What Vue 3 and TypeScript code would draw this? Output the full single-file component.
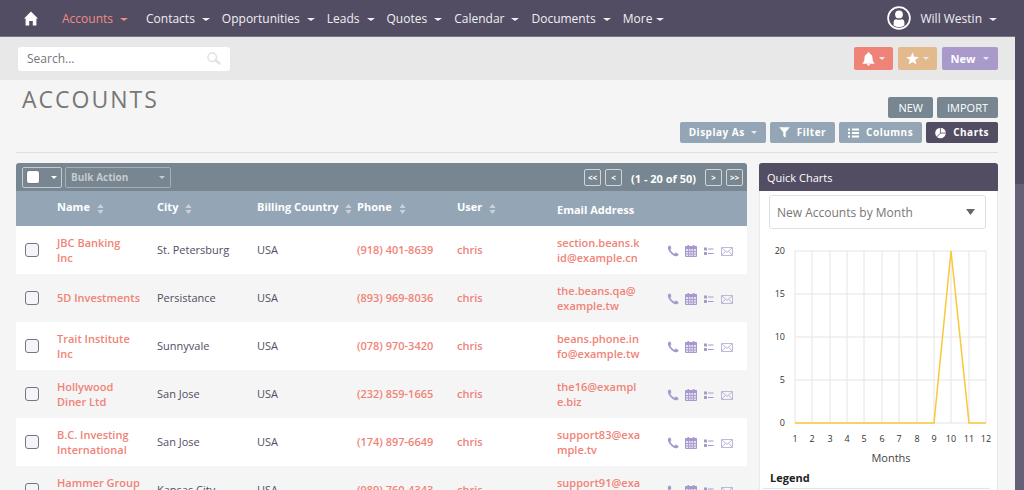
<script setup lang="ts">
import { ref } from 'vue'

interface Account {
  name: string
  city: string
  country: string
  phone: string
  user: string
  email: string
}

const modules: string[] = ['Accounts', 'Contacts', 'Opportunities', 'Leads', 'Quotes', 'Calendar', 'Documents']

const columns: string[] = ['Name', 'City', 'Billing Country', 'Phone', 'User']

const accounts: Account[] = [
  { name: 'JBC Banking Inc', city: 'St. Petersburg', country: 'USA', phone: '(918) 401-8639', user: 'chris', email: 'section.beans.kid@example.cn' },
  { name: '5D\u00a0Investments', city: 'Persistance', country: 'USA', phone: '(893) 969-8036', user: 'chris', email: 'the.beans.qa@example.tw' },
  { name: 'Trait Institute Inc', city: 'Sunnyvale', country: 'USA', phone: '(078) 970-3420', user: 'chris', email: 'beans.phone.info@example.tw' },
  { name: 'Hollywood Diner Ltd', city: 'San Jose', country: 'USA', phone: '(232) 859-1665', user: 'chris', email: 'the16@example.biz' },
  { name: 'B.C. Investing International', city: 'San Jose', country: 'USA', phone: '(174) 897-6649', user: 'chris', email: 'support83@example.tv' },
  { name: 'Hammer\u00a0Group Inc', city: 'Kansas City', country: 'USA', phone: '(989) 760-4343', user: 'chris', email: 'support91@example.com' }
]

const search = ref('')
const selected = ref<string[]>([])
const allSelected = ref(false)

const monthly: number[] = [0, 0, 0, 0, 0, 0, 0, 0, 0, 20, 0, 0]
const ticks: number[] = [20, 15, 10, 5, 0]
const plot = { left: 35, right: 226, top: 17, bottom: 189 }
const px = (month: number): number => Math.round(plot.left + ((month - 1) * (plot.right - plot.left)) / 11)
const py = (value: number): number => plot.bottom - (value * (plot.bottom - plot.top)) / 20
const line = monthly.map((v, i) => `${px(i + 1)},${py(v)}`).join(' ')
</script>

<template>
  <div class="page">
    <div class="content">
      <header class="navbar">
        <a class="home" href="#" aria-label="Home">
          <svg width="14" height="15" viewBox="0 0 14 15"><path d="M7 0.5 L14 7.6 H12.4 V14.5 H8.8 V10 H5.2 V14.5 H1.6 V7.6 H0 Z" fill="#fff" /></svg>
        </a>
        <nav class="modules">
          <a v-for="(m, i) in modules" :key="m" href="#" :class="['module', { active: i === 0 }]">{{ m }}<i class="caret"></i></a>
          <a href="#" class="module more">More<i class="caret"></i></a>
        </nav>
        <a href="#" class="user">
          <svg width="24" height="24" viewBox="0 0 24 24">
            <circle cx="12" cy="12" r="10.9" fill="none" stroke="#fff" stroke-width="1.7" />
            <circle cx="12" cy="8.4" r="3.9" fill="#fff" />
            <path d="M6.6 19.6 V16.6 Q6.6 13.2 9.4 13.2 Q12 14.2 14.6 13.2 Q17.4 13.2 17.4 16.6 V19.6 Q12 23 6.6 19.6Z" fill="#fff" />
          </svg>
          <span>Will Westin</span><i class="caret"></i>
        </a>
      </header>

      <div class="subbar">
        <form class="search" role="search" @submit.prevent>
          <input v-model="search" type="text" placeholder="Search..." aria-label="Search" />
          <button type="submit" aria-label="Run search">
            <svg width="14" height="13" viewBox="0 0 14 13" fill="none" stroke="#e2e2e2"><circle cx="5.2" cy="5.2" r="4.3" stroke-width="1.5" /><path d="M8.6 8.2 L12.4 11.4" stroke-width="2.6" stroke-linecap="round" /></svg>
          </button>
        </form>
        <div class="quick">
          <button class="btn alerts" aria-label="Alerts">
            <svg width="13" height="14" viewBox="0 0 13 14" fill="#fff"><path d="M6.5 0.3 C7.2 0.3 7.6 0.8 7.5 1.5 C9.6 2.1 10.5 3.8 10.5 6 C10.5 8.8 11.2 9.9 12.4 11 V11.8 H0.6 V11 C1.8 9.9 2.5 8.8 2.5 6 C2.5 3.8 3.4 2.1 5.5 1.5 C5.4 0.8 5.8 0.3 6.5 0.3Z" /><path d="M4.8 12 H8.2 Q7.8 13.7 6.5 13.7 Q5.2 13.7 4.8 12Z" /></svg>
            <i class="caret"></i>
          </button>
          <button class="btn favorites" aria-label="Favorites">
            <svg width="13" height="13" viewBox="0 0 13 13"><path d="M6.5 0.2 L8.2 4.8 L12.9 4.9 L9.2 7.9 L10.5 12.6 L6.5 9.9 L2.5 12.6 L3.8 7.9 L0.1 4.9 L4.8 4.8Z" fill="#fff" /></svg>
            <i class="caret"></i>
          </button>
          <button class="btn create">New<i class="caret"></i></button>
        </div>
      </div>

      <main>
        <div class="heading">
          <h1>ACCOUNTS</h1>
          <div class="actions">
            <div class="action-row">
              <button class="btn slate">NEW</button>
              <button class="btn slate">IMPORT</button>
            </div>
            <div class="action-row tools">
              <button class="btn tool">Display As<i class="caret"></i></button>
              <button class="btn tool icon">
                <svg width="11" height="11" viewBox="0 0 11 11"><path d="M0.2 0.3 H10.8 L6.7 5.3 V10.8 L4.3 8.9 V5.3Z" fill="#fff" /></svg>Filter
              </button>
              <button class="btn tool icon">
                <svg width="11" height="10" viewBox="0 0 11 10" fill="#fff"><path d="M0 0.5h2v2h-2z M0 4h2v2h-2z M0 7.5h2v2h-2z M4 0.5h7v2h-7z M4 4h7v2h-7z M4 7.5h7v2h-7z" /></svg>Columns
              </button>
              <button class="btn tool icon dark">
                <svg width="11" height="12" viewBox="0 0 11 12"><circle cx="5.5" cy="6" r="5.3" fill="#fff" /><path d="M5.4 0 L5.4 6.2 L10.8 6 M5.4 6.2 L1.6 10" fill="none" stroke="#534d64" stroke-width="0.8" /></svg>Charts
              </button>
            </div>
          </div>
        </div>

        <div class="columns">
          <section class="list">
            <div class="toolbar">
              <div class="select-all">
                <input v-model="allSelected" type="checkbox" aria-label="Select all" />
                <button aria-label="Selection options"><i class="caret"></i></button>
              </div>
              <div class="bulk">
                <select aria-label="Bulk Action"><option>Bulk Action</option></select>
                <i class="caret"></i>
              </div>
              <div class="pager">
                <button aria-label="First page">&lt;&lt;</button>
                <button aria-label="Previous page">&lt;</button>
                <span>(1 - 20 of 50)</span>
                <button aria-label="Next page">&gt;</button>
                <button aria-label="Last page">&gt;&gt;</button>
              </div>
            </div>
            <table>
              <colgroup>
                <col class="c-check" />
                <col v-for="c in columns" :key="c" class="c-data" />
                <col class="c-data" />
                <col />
              </colgroup>
              <thead>
                <tr>
                  <th></th>
                  <th v-for="c in columns" :key="c" scope="col">
                    <a href="#">{{ c }}<svg width="7" height="10" viewBox="0 0 7 10" fill="#c9d1d9"><path d="M3.5 0 L6.6 4 H0.4Z M0.4 6 H6.6 L3.5 10Z" /></svg></a>
                  </th>
                  <th scope="col" class="plain">Email Address</th>
                  <th></th>
                </tr>
              </thead>
              <tbody>
                <tr v-for="a in accounts" :key="a.name">
                  <td class="check"><input v-model="selected" type="checkbox" :value="a.name" :aria-label="'Select ' + a.name" /></td>
                  <td><a href="#">{{ a.name }}</a></td>
                  <td>{{ a.city }}</td>
                  <td>{{ a.country }}</td>
                  <td><a href="#">{{ a.phone }}</a></td>
                  <td><a href="#">{{ a.user }}</a></td>
                  <td class="email"><a href="#">{{ a.email }}</a></td>
                  <td class="row-actions">
                    <div>
                      <a href="#" aria-label="Log call"><svg width="12" height="12" viewBox="0 0 12 12"><path d="M1.7 0.7 L3.3 0.5 L4.5 3.3 L3.3 4.5 C4 6.4 5.5 7.8 7.4 8.7 L8.7 7.6 L11.5 9 L11.2 10.6 C9.9 12 7 11.3 4.5 9 C1.8 6.5 -0.5 2.9 1.7 0.7Z" fill="#a699cb" /></svg></a>
                      <a href="#" aria-label="Schedule meeting"><svg width="12" height="12" viewBox="0 0 12 12"><path d="M0.5 1.5 H11.5 V11.5 H0.5Z" fill="#e4dff0" stroke="#a699cb" /><path d="M0.5 1.5 H11.5 V4 H0.5Z M2.5 0 H4 V3 H2.5Z M8 0 H9.5 V3 H8Z" fill="#a699cb" /><path d="M1 6.5 H11 M1 9 H11 M3.5 4 V11 M6 4 V11 M8.5 4 V11" stroke="#a699cb" stroke-width="0.9" /></svg></a>
                      <a href="#" aria-label="Create task"><svg width="12" height="12" viewBox="0 0 12 12" fill="#a699cb"><path d="M1 2.5h3v3h-3z M1 7h3v3h-3z M5 3.5h5.5v1h-5.5z M5 8h5.5v1h-5.5z" /></svg></a>
                      <a href="#" aria-label="Send email"><svg width="12" height="12" viewBox="0 0 12 12" fill="none" stroke="#b9afd6" stroke-width="0.9"><path d="M0.5 2.5 H11.5 V10.5 H0.5Z M0.7 2.7 L6 7.4 L11.3 2.7 M0.7 10.3 L4.4 6.2 M11.3 10.3 L7.6 6.2" /></svg></a>
                    </div>
                  </td>
                </tr>
              </tbody>
            </table>
          </section>

          <aside class="charts">
            <h2>Quick Charts</h2>
            <div class="chart-select">
              <select aria-label="Chart"><option>New Accounts by Month</option></select>
              <svg width="9" height="6" viewBox="0 0 9 6"><path d="M0 0 H9 L4.5 6Z" fill="#666" /></svg>
            </div>
            <svg class="chart" viewBox="0 0 237 230" role="img" aria-label="New accounts by month">
              <g stroke="#e4e4e4" stroke-width="1">
                <line v-for="t in ticks" :key="'h' + t" :x1="plot.left" :x2="plot.right" :y1="py(t)" :y2="py(t)" />
                <line v-for="m in 12" :key="'v' + m" :x1="px(m)" :x2="px(m)" :y1="plot.top" :y2="plot.bottom" />
              </g>
              <polyline :points="line" fill="none" stroke="#fac83c" stroke-width="1.5" />
              <g class="axis">
                <text v-for="t in ticks" :key="'y' + t" x="25" :y="py(t) + 3" text-anchor="end">{{ t }}</text>
                <text v-for="m in 12" :key="'x' + m" :x="px(m)" y="208" text-anchor="middle">{{ m }}</text>
              </g>
              <text class="axis-title" x="131" y="228" text-anchor="middle">Months</text>
            </svg>
            <h3>Legend</h3>
          </aside>
        </div>
      </main>
    </div>
    <div class="scrollbar"><div class="thumb"></div></div>
  </div>
</template>

<style>
body {
  margin: 0;
  background: #f5f5f5;
}
</style>

<style scoped>
.page {
  display: flex;
  height: 100vh;
  overflow: hidden;
  background: #f5f5f5;
  color: #534d64;
  font-family: "Open Sans", "Noto Sans", sans-serif;
  font-size: 11px;
  line-height: 15px;
}
* {
  box-sizing: border-box;
}
a {
  color: inherit;
  text-decoration: none;
}
button, input, select {
  margin: 0;
  font: inherit;
}
svg {
  display: block;
  flex: none;
}
.content {
  flex: 1;
  min-width: 0;
}
.scrollbar {
  width: 9px;
  background: #665f78;
}
.thumb {
  height: 184px;
  background: #534d64;
}
.caret {
  display: inline-block;
  flex: none;
  border: solid transparent;
  border-width: 3px 3px 0;
  border-top-color: currentColor;
}
.navbar {
  display: flex;
  align-items: center;
  height: 37px;
  padding: 0 18px 0 24px;
  background: #534d64;
  border-bottom: 1px solid #777287;
  color: #f0eff2;
  font-size: 12px;
}
.modules {
  display: flex;
  gap: 12px;
  margin-left: 24px;
}
.module {
  display: flex;
  align-items: center;
  gap: 7px;
}
.module .caret, .user .caret {
  margin-top: 3px;
  border-width: 3px 4px 0;
}
.module.active {
  color: #f08c82;
  margin-right: 6px;
}
.module.more {
  gap: 4px;
}
.user {
  display: flex;
  align-items: center;
  gap: 7px;
  margin-left: auto;
}
.user svg {
  margin-right: 3px;
}
.subbar {
  display: flex;
  align-items: center;
  justify-content: space-between;
  height: 43px;
  padding: 0 17px 0 18px;
  background: #e8e8e8;
}
.search {
  display: flex;
  align-items: center;
  width: 212px;
  height: 24px;
  padding: 0 9px;
  background: #fff;
  border-radius: 3px;
}
.search input {
  flex: 1;
  min-width: 0;
  padding: 0;
  border: 0;
  outline: 0;
  background: none;
  font-size: 12px;
}
.search input::placeholder {
  color: #75757d;
}
.search button {
  padding: 0;
  border: 0;
  background: none;
}
.quick {
  display: flex;
  gap: 5px;
}
.btn {
  display: flex;
  align-items: center;
  justify-content: center;
  height: 21px;
  padding: 0 9px;
  border: 0;
  border-radius: 2px;
  color: #fff;
}
.quick .btn {
  height: 23px;
  padding: 0 8px;
  gap: 4px;
}
.btn .caret {
  color: #e8eaee;
}
.quick .alerts {
  background: #f08377;
}
.quick .favorites {
  background: #e3b98e;
}
.quick .create {
  width: 56px;
  gap: 8px;
  background: #a99acb;
  font-weight: 700;
}
main {
  padding: 0 17px 0 16px;
}
.heading {
  display: flex;
  justify-content: space-between;
  height: 73px;
  border-bottom: 1px solid #e0e0e0;
}
h1 {
  margin: 3px 0 0 6px;
  color: #777;
  font-size: 23px;
  font-weight: 400;
  line-height: 32px;
  letter-spacing: 2px;
}
.actions {
  padding-top: 17px;
}
.action-row {
  display: flex;
  justify-content: flex-end;
  gap: 4px;
  margin-bottom: 4px;
}
.slate {
  padding: 0 10px;
  background: #778690;
}
.tool {
  gap: 6px;
  background: #94a6b5;
  font-size: 10px;
  font-weight: 700;
  letter-spacing: 0.5px;
}
.tool.icon {
  gap: 7px;
}
.dark {
  background: #534d64;
}
.columns {
  display: grid;
  grid-template-columns: 1fr 239px;
  align-items: start;
  gap: 12px;
  padding-top: 10px;
}
.toolbar {
  display: flex;
  align-items: center;
  gap: 3px;
  height: 28px;
  padding: 0 4px 0 6px;
  background: #778690;
  border-radius: 3px 3px 0 0;
  color: #fff;
}
.select-all {
  display: flex;
  align-items: center;
  justify-content: space-between;
  width: 40px;
  height: 21px;
  padding: 0 2px 0 3px;
  border: 1px solid #c4cbd0;
  border-radius: 2px;
}
.select-all button {
  display: flex;
  padding: 0 2px;
  border: 0;
  background: none;
  color: #fff;
}
input[type="checkbox"] {
  appearance: none;
  display: block;
  width: 14px;
  height: 14px;
  background: #f5f5f7;
  border: 1px solid #777287;
  border-radius: 3px;
}
input[type="checkbox"]:checked {
  background: #534d64;
}
.select-all input[type="checkbox"] {
  background: #fff;
}
.bulk {
  display: flex;
  align-items: center;
  width: 106px;
  height: 21px;
  padding: 0 5px 0 0;
  border: 1px solid #a5afb6;
  border-radius: 2px;
  color: #c5cbd0;
}
.bulk select, .chart-select select {
  appearance: none;
  flex: 1;
  min-width: 0;
  padding: 0 0 0 5px;
  border: 0;
  outline: 0;
  background: none;
  color: inherit;
  opacity: 1;
}
.bulk select {
  font-size: 10px;
  font-weight: 700;
}
.pager {
  display: flex;
  align-items: center;
  gap: 4px;
  margin-left: auto;
  font-weight: 700;
}
.pager span {
  padding: 3px 5px 0;
}
.pager button {
  display: flex;
  align-items: center;
  justify-content: center;
  width: 17px;
  height: 17px;
  padding: 0;
  border: 1px solid #d0d5d9;
  border-radius: 2px;
  background: none;
  color: #fff;
  font-size: 8px;
}
table {
  width: 100%;
  table-layout: fixed;
  border-collapse: collapse;
}
.c-check {
  width: 32px;
}
.c-data {
  width: 100px;
}
thead tr {
  height: 35px;
  background: #94a6b5;
  color: #fff;
}
th {
  padding: 0 0 4px 9px;
  text-align: left;
  font-weight: 700;
  white-space: nowrap;
}
th.plain {
  padding: 2px 0 0 9px;
}
th a {
  display: flex;
  align-items: center;
  gap: 7px;
}
th svg {
  margin-top: 5px;
}
tbody tr {
  height: 48px;
  background: #f5f5f5;
}
tbody tr:nth-child(odd) {
  background: #fff;
}
td {
  padding: 0 9px 1px;
}
td a {
  color: #f08377;
  font-weight: 600;
}
td.email {
  padding-right: 6px;
  word-break: break-all;
}
td.row-actions {
  padding: 2px 0 0 19px;
}
.row-actions div {
  display: flex;
  gap: 6px;
}
.charts {
  height: 400px;
  background: #fff;
  border: 1px solid #e9e9e9;
  border-top: 0;
  border-radius: 3px 3px 0 0;
}
h2 {
  height: 28px;
  margin: 0 -1px;
  padding: 0 8px;
  background: #534d64;
  border-radius: 3px 3px 0 0;
  color: #fff;
  font-size: 11px;
  font-weight: 400;
  line-height: 29px;
}
.chart-select {
  display: flex;
  align-items: center;
  height: 34px;
  margin: 4px 11px 0 9px;
  padding-right: 10px;
  border: 1px solid #dbe3ea;
  border-radius: 3px;
  color: #777;
  font-size: 12px;
}
.chart-select select {
  padding-left: 7px;
}
.chart {
  width: 100%;
  margin-top: 5px;
}
.axis {
  fill: #333;
  font-size: 9px;
}
.axis-title {
  fill: #444;
  font-size: 11px;
}
h3 {
  margin: 3px 7px 0 3px;
  padding: 3px 7px;
  border-bottom: 1px solid #e4e4e4;
  color: #222;
  font-size: 11px;
  font-weight: 700;
  line-height: 15px;
}
</style>
